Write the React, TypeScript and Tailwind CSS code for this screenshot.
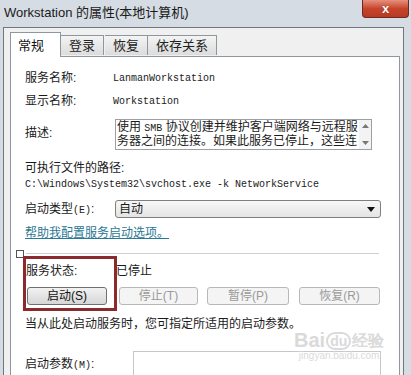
import React from "react";

const cjk = "font-['Liberation_Sans','Noto_Sans_CJK_SC',sans-serif]";
const mono = "font-['Liberation_Mono','Noto_Sans_CJK_SC',monospace]";

function Tab({ label, active }: { label: string; active?: boolean }) {
  if (active) {
    return (
      <div className="relative z-10 -mb-px flex h-[25px] w-[51px] items-start border border-b-0 border-[#8e969e] bg-white pl-[7px] pt-[3px] text-[13px] text-[#111]">
        {label}
      </div>
    );
  }
  return (
    <div className="mt-[3px] flex h-[20px] items-center border border-b-0 border-l-0 border-[#8e969e] bg-gradient-to-b from-[#f4f4f4] to-[#dcdcdc] px-[8px] text-[13px] text-[#222]">
      {label}
    </div>
  );
}

function Btn({ label, w, enabled }: { label: string; w: string; enabled?: boolean }) {
  return (
    <div
      className={
        enabled
          ? `flex h-[18px] ${w} items-center justify-center rounded-[3px] border border-[#707070] bg-gradient-to-b from-[#f2f2f2] to-[#d6d6d6] text-[12px] text-[#111]`
          : `flex h-[18px] ${w} items-center justify-center rounded-[3px] border border-[#b8b8b8] bg-[#f4f4f4] text-[12px] text-[#9a9a9a]`
      }
    >
      {label}
    </div>
  );
}

export default function App() {
  return (
    <div className={`relative h-[375px] w-[411px] overflow-hidden bg-[#d6dce3] ${cjk}`}>
      {/* title bar */}
      <div className="flex h-[27px] items-start">
        <div className="pl-[4px] pt-[5px] text-[13px] leading-[16px] text-[#1a1a1a]">
          Workstation 的属性(本地计算机)
        </div>
        <div className="ml-auto mr-[2px] flex h-[18px] w-[47px] items-center justify-center rounded-b-[4px] border border-t-0 border-[#6b2a22] bg-gradient-to-b from-[#e5907c] via-[#c7442c] to-[#b83a22]">
          <span className="text-[13px] font-bold leading-none text-white [text-shadow:0_0_1px_#5a1a10]">x</span>
        </div>
      </div>

      {/* client area */}
      <div className="ml-[3px] mr-[7px] h-[348px] border border-b-0 border-[#6f767e] bg-[#f0f0f0] pl-[6px] pt-[4px]">
        <div className="flex items-start">
          <Tab label="常规" active />
          <Tab label="登录" />
          <div className="ml-[1px]">
            <Tab label="恢复" />
          </div>
          <Tab label="依存关系" />
        </div>

        <div className="h-[330px] w-[390px] border border-b-0 border-[#8e969e] bg-white text-[12px] text-[#1a1a1a]">
          <div className="mt-[11px] flex h-[20px] items-center pl-[14px]">
            <span className="w-[88px]">服务名称:</span>
            <span className={`${mono} text-[10px]`}>LanmanWorkstation</span>
          </div>
          <div className="mt-[3px] flex h-[20px] items-center pl-[14px]">
            <span className="w-[88px]">显示名称:</span>
            <span className={`${mono} text-[10px]`}>Workstation</span>
          </div>

          <div className="mt-[8px] flex items-start pl-[14px]">
            <span className="mt-[5px] w-[90px]">描述:</span>
            <div className="flex h-[31px] w-[257px] overflow-hidden border border-[#9aa0a6] bg-white">
              <div className="flex-1 overflow-hidden whitespace-nowrap pl-[1px] pt-[1px] text-[12px] leading-[13px]">
                <div>
                  使用 <span className={`${mono} text-[10px]`}>SMB</span> 协议创建并维护客户端网络与远程服
                </div>
                <div>务器之间的连接。如果此服务已停止，这些连</div>
              </div>
              <div className="flex w-[12px] shrink-0 flex-col items-center justify-between bg-[#f3f3f3] py-[4px]">
                <svg width="7" height="4" viewBox="0 0 7 4">
                  <path d="M0 4 L3.5 0 L7 4 Z" fill="#777" />
                </svg>
                <svg width="7" height="4" viewBox="0 0 7 4">
                  <path d="M0 0 L7 0 L3.5 4 Z" fill="#777" />
                </svg>
              </div>
            </div>
          </div>

          <div className="mt-[9px] flex h-[18px] items-center pl-[14px]">可执行文件的路径:</div>
          <div className={`flex h-[14px] items-center pl-[14px] ${mono} text-[10px]`}>
            C:\Windows\System32\svchost.exe -k NetworkService
          </div>

          <div className="mt-[9px] flex items-center pl-[14px]">
            <span className="w-[90px]">
              启动类型<span className={`${mono} text-[10px]`}>(E)</span>:
            </span>
            <div className="flex h-[18px] w-[266px] items-center rounded-[3px] border border-[#7f7f7f] bg-gradient-to-b from-[#f7f7f7] to-[#e4e4e4] pl-[3px] pr-[5px]">
              <span className="text-[12px]">自动</span>
              <svg className="ml-auto" width="8" height="5" viewBox="0 0 8 5">
                <path d="M0 0 L8 0 L4 5 Z" fill="#111" />
              </svg>
            </div>
          </div>

          <div className="mt-[7px] flex h-[16px] items-center pl-[14px] text-[#2a7893] underline">
            帮助我配置服务启动选项。
          </div>

          <div className="mt-[8px] flex h-[9px] items-center pl-[5px]">
            <div className="h-[8px] w-[8px] border border-[#555] bg-white" />
            <div className="ml-[2px] h-px w-[353px] bg-[#cfcfcf]" />
          </div>

          <div className="mt-[5px] flex h-[16px] items-center pl-[15px]">
            <span className="w-[90px]">服务状态:</span>
            <span>已停止</span>
          </div>

          <div className="mt-[8px] flex items-center pl-[16px]">
            <Btn label="启动(S)" w="w-[80px]" enabled />
            <div className="ml-[12px]">
              <Btn label="停止(T)" w="w-[79px]" />
            </div>
            <div className="ml-[9px]">
              <Btn label="暂停(P)" w="w-[82px]" />
            </div>
            <div className="ml-[10px]">
              <Btn label="恢复(R)" w="w-[81px]" />
            </div>
          </div>

          <div className="mt-[11px] flex h-[16px] items-center pl-[14px]">
            当从此处启动服务时，您可指定所适用的启动参数。
          </div>

          <div className="mt-[19px] flex items-start pl-[14px]">
            <span className="mt-[4px] w-[108px]">
              启动参数<span className={`${mono} text-[10px]`}>(M)</span>:
            </span>
            <div className="h-[26px] w-[248px] border border-[#c4c8cc] bg-white" />
          </div>
        </div>
      </div>

      {/* highlight annotation */}
      <div className="absolute left-[23px] top-[256px] h-[55px] w-[94px] border-[3px] border-[#8a2a2e]" />

      {/* watermark */}
      <div className="pointer-events-none absolute left-[294px] top-[330px] flex flex-col items-center text-[#dadada]">
        <div className="flex items-end font-['Liberation_Sans',sans-serif] text-[20px] font-bold leading-[20px]">
          <span>Bai</span>
          <span className="mx-[1px] rounded-full border-2 border-[#dadada] px-[2px] text-[14px] leading-[14px]">du</span>
          <span className="text-[16px] leading-[18px]">经验</span>
        </div>
        <div className="font-['Liberation_Sans',sans-serif] text-[10px] leading-[12px]">jingyan.baidu.com</div>
      </div>
    </div>
  );
}
